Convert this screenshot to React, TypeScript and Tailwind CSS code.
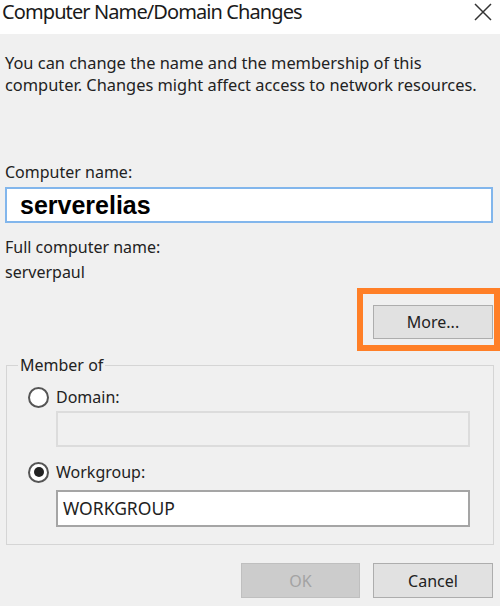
import React from "react";

function Radio({ checked }: { checked?: boolean }) {
  return (
    <span className="w-[21px] h-[21px] rounded-full border-2 border-[#555] bg-white flex items-center justify-center shrink-0">
      {checked && <span className="w-[10px] h-[10px] rounded-full bg-[#222]" />}
    </span>
  );
}

export default function App() {
  return (
    <div className="w-[500px] h-[606px] overflow-hidden bg-[#f0f0f0] text-[#222] font-['Noto_Sans',sans-serif] flex flex-col">
      {/* Title bar */}
      <div className="h-[34px] bg-white flex items-start justify-between shrink-0 pt-[1px] pl-[2px]">
        <span className="text-[20px] leading-[22px] tracking-[-0.9px] text-[#1a1a1a]">Computer Name/Domain Changes</span>
        <svg width="18" height="18" viewBox="0 0 18 18" className="mr-[8px] mt-[2px]">
          <path d="M1 1 L17 17 M17 1 L1 17" stroke="#333" strokeWidth="1.5" />
        </svg>
      </div>

      <div className="pl-[5px] flex flex-col">
        <p className="mt-[18px] text-[16.4px] leading-[22px]">
          You can change the name and the membership of this
          <br />
          computer. Changes might affect access to network resources.
        </p>

        <div className="mt-[66px] text-[16px] leading-[20px]">Computer name:</div>
        <div className="mt-[5px] w-[488px] h-[36px] bg-white border-2 border-[#82b6ec] flex items-center pl-[13px]">
          <span className="font-['Liberation_Sans',sans-serif] font-bold text-[25px] text-black leading-none">serverelias</span>
        </div>

        <div className="mt-[14px] text-[16px] leading-[20px]">Full computer name:</div>
        <div className="mt-[5px] text-[16px] leading-[20px]">serverpaul</div>

        {/* More button highlighted */}
        <div className="flex justify-end mt-[6px]">
          <div className="w-[143px] h-[63px] border-[6px] border-[#ff7f27] pl-[10px] pt-[11px]">
            <button className="w-[120px] h-[34px] bg-[#e1e1e1] border border-[#adadad] text-[16px] leading-none">
              More...
            </button>
          </div>
        </div>

        {/* Member of */}
        <fieldset className="mt-[4px] ml-[1px] w-[488px] h-[190px] border border-[#d5d5d5] pl-[21px] pr-0 pb-0">
          <legend className="ml-[-10px] px-[2px] text-[16px] leading-[20px]">Member of</legend>
          <div className="mt-[12px] flex items-center gap-[7px] h-[20px]">
            <Radio />
            <span className="text-[16px] leading-[20px]">Domain:</span>
          </div>
          <div className="mt-[4px] ml-[28px] w-[414px] h-[36px] bg-[#f0f0f0] border-2 border-[#dcdcdc]" />
          <div className="mt-[15px] flex items-center gap-[7px] h-[20px]">
            <Radio checked />
            <span className="text-[16px] leading-[20px]">Workgroup:</span>
          </div>
          <div className="mt-[8px] ml-[28px] w-[414px] h-[37px] bg-white border-2 border-[#a5a5a5] flex items-center pl-[5px]">
            <span className="text-[17.5px] leading-none">WORKGROUP</span>
          </div>
        </fieldset>

        {/* Dialog buttons */}
        <div className="mt-[18px] flex justify-end gap-[13px] pr-[7px]">
          <button disabled className="w-[119px] h-[35px] bg-[#cccccc] border border-[#bfbfbf] text-[#a3a3a3] text-[16px] leading-none">
            OK
          </button>
          <button className="w-[120px] h-[35px] bg-[#e1e1e1] border border-[#adadad] text-[16px] leading-none">
            Cancel
          </button>
        </div>
      </div>
    </div>
  );
}
